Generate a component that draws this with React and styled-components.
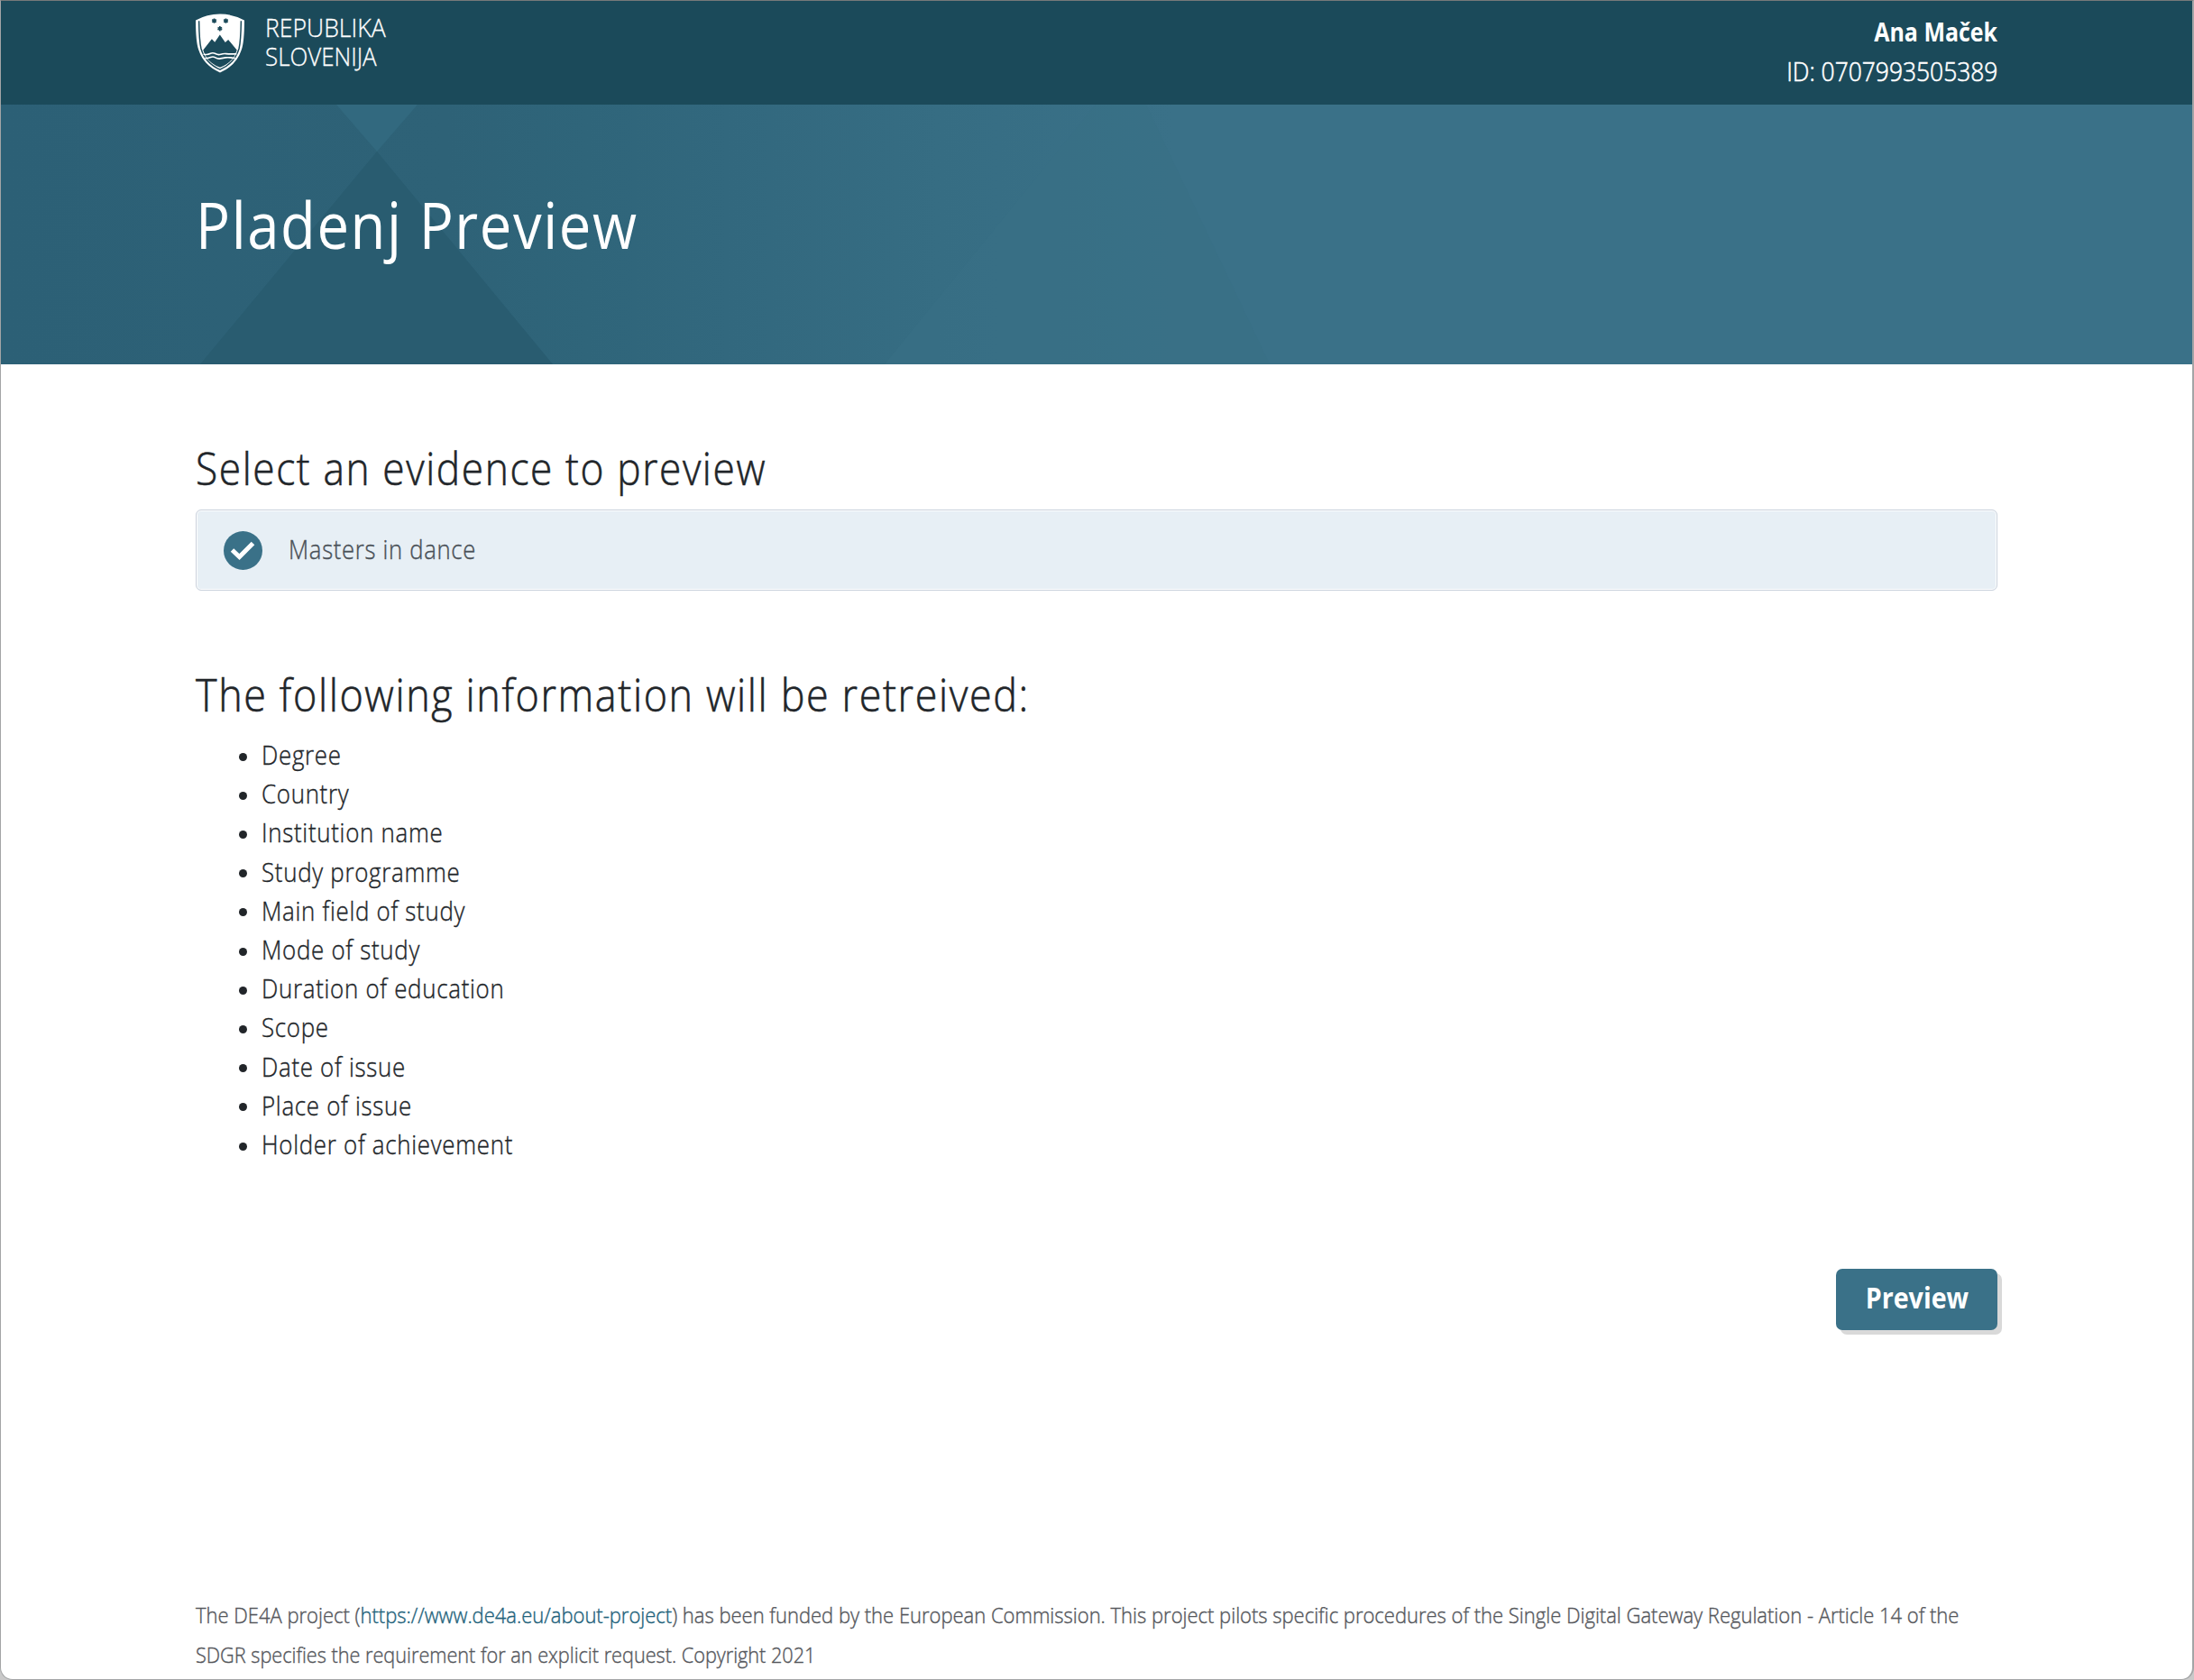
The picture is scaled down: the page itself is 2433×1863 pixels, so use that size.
import React from 'react';
import styled, { createGlobalStyle } from 'styled-components';

const GlobalStyle = createGlobalStyle`
  *, *::before, *::after { box-sizing: border-box; }
  html, body { margin: 0; padding: 0; background: #c9c9c9; }
  body {
    font-family: "Open Sans", "Noto Sans", sans-serif;
    font-size: 29px;
    font-weight: 300;
    line-height: 43.2px;
    color: #212529;
  }
`;

const Narrow = styled.span`
  display: inline-block;
  white-space: nowrap;
  transform: scaleX(${(p) => p.$x});
  transform-origin: ${(p) => p.$from || 'left'} center;
  -webkit-text-stroke: ${(p) => p.$stroke || 0}px currentColor;
`;

const Page = styled.div`
  width: 100%;
  height: 1863px;
  display: flex;
  flex-direction: column;
  background: #fff;
  border: 1px solid #a3a5a6;
  border-top-color: #77797a;
  border-right-width: 2px;
  border-radius: 0 0 14px 14px;
  overflow: hidden;
`;

const TopBar = styled.header`
  height: 115px;
  flex: none;
  display: flex;
  justify-content: space-between;
  padding: 0 216px;
  background: #1b4a5a;
  color: #fff;
`;

const Brand = styled.div`
  display: flex;
  gap: 23px;
  padding-top: 14px;
`;

const BrandName = styled.div`
  display: flex;
  flex-direction: column;
  font-size: 27px;
  line-height: 32px;
`;

const User = styled.div`
  display: flex;
  flex-direction: column;
  align-items: flex-end;
  padding-top: 12px;
  line-height: 44px;
`;

const UserName = styled.strong`
  font-weight: 700;
`;

const UserId = styled.span``;

const Hero = styled.section`
  position: relative;
  height: 288px;
  flex: none;
  padding: 92px 216px 0;
  background: #3a7188;
  color: #fff;
`;

const HeroArt = styled.svg`
  position: absolute;
  inset: 0;
  width: 2430px;
  height: 288px;
`;

const Title = styled.h1`
  position: relative;
  margin: 0;
  font-size: 72px;
  line-height: 80px;
  font-weight: 400;
  letter-spacing: 1.8px;
`;

const Main = styled.main`
  flex: 1;
  display: flex;
  flex-direction: column;
  padding: 85px 216px 0;
`;

const Heading = styled.h2`
  margin: 0;
  font-size: 50px;
  line-height: 60px;
  font-weight: 300;
  letter-spacing: 1.8px;
`;

const Evidence = styled.div`
  display: flex;
  align-items: center;
  gap: 29px;
  height: 90px;
  margin: 16px 0 85px;
  padding: 0 30px;
  background: #e7eff5;
  border: 1px solid #c9d1dc;
  border-radius: 6px;
  box-shadow: inset 0 0 0 1px #fff;
  color: #495057;
  letter-spacing: 0.8px;
`;

const EvidenceName = styled.span`
  padding-bottom: 2px;
`;

const FieldList = styled.ul`
  list-style: none;
  margin: 15px 0 0;
  padding: 0 0 0 48px;
  letter-spacing: 0.8px;
`;

const Field = styled.li`
  display: flex;
  align-items: center;
  gap: 16px;

  &::before {
    content: "";
    width: 9px;
    height: 9px;
    margin-top: 5px;
    border-radius: 50%;
    background: #212529;
  }
`;

const Actions = styled.div`
  display: flex;
  justify-content: flex-end;
  margin-top: 117px;
`;

const Button = styled.button`
  width: 179px;
  height: 68px;
  padding: 0 0 5px;
  border: 0;
  border-radius: 7px;
  background: #3a7188;
  box-shadow: 5px 5px 0 #d9d9d9;
  color: #fff;
  font-family: inherit;
  font-size: 32px;
  font-weight: 700;
`;

const Footer = styled.footer`
  padding: 1px 216px 0;
  height: 94px;
  flex: none;
  display: flex;
  flex-direction: column;
  align-items: flex-start;
  font-size: 24px;
  line-height: 43.6px;
  color: #55575c;
`;

const Link = styled.a`
  color: #22627b;
  text-decoration: none;
`;

const Emblem = () => (
  <svg width="54" height="66" viewBox="80 43 163 198">
    <path d="M80 65Q118 44 161.500 44Q205 44 243 65Q243 138 233 165Q216 217 161.500 240Q107 217 90 165Q80 138 80 65Z" fill="#fff" />
    <path d="M91 67Q92 135 98 160Q112 208 161.500 230Q211 208 225 160Q231 135 232 67" fill="none" stroke="#1b4a5a" strokeWidth="4.500" />
    <path d="M105 165L134 128L144 138L161 113L179 139L189 130L218 165Q215 176 208 187Q194 210 161.500 223Q129 210 115 187Q108 176 105 165Z" fill="#1b4a5a" />
    <path d="M106 178Q119 182 128 177T146 177T164 179T182 177T200 178T217 177M111 192Q122 193 130 189T146 190T163 193T180 190T196 190T212 192" fill="none" stroke="#fff" strokeWidth="5" />
    {[[142, 67], [181, 67], [161, 93]].map(([x, y]) => (
      <path key={`${x}-${y}`} d={`M${x} ${y - 8}V${y + 8}M${x - 7} ${y - 4}L${x + 7} ${y + 4}M${x - 7} ${y + 4}L${x + 7} ${y - 4}`} stroke="#1b4a5a" strokeWidth="5" />
    ))}
  </svg>
);

const CheckIcon = () => (
  <svg width="43" height="43" viewBox="0 0 43 43">
    <circle cx="21.500" cy="21.500" r="21.500" fill="#3a7188" />
    <path d="M9.500 21L17.500 28.500L32.500 13.500" fill="none" stroke="#fff" strokeWidth="5" />
  </svg>
);

const HeroBackground = () => (
  <HeroArt viewBox="0 0 2430 288" aria-hidden="true">
    <defs>
      <linearGradient id="base" gradientUnits="userSpaceOnUse" x1="0" y1="0" x2="1300" y2="0">
        <stop offset="0" stopColor="#2c6076" />
        <stop offset="0.38" stopColor="#2e6277" />
        <stop offset="0.5" stopColor="#2f657a" />
        <stop offset="0.62" stopColor="#32687e" />
        <stop offset="0.8" stopColor="#366d83" />
        <stop offset="1" stopColor="#3a7188" />
      </linearGradient>
    </defs>
    <path d="M0 0H2430V288H0Z" fill="url(#base)" />
    <path d="M372 0H462L417 52Z" fill="#32697f" />
    <path d="M417 52L612 288H221Z" fill="#295c70" />
    <path d="M1214 0H1270L1407 288H980Z" fill="#387086" opacity="0.6" />
  </HeroArt>
);

const fields = [
  'Degree', 'Country', 'Institution name', 'Study programme', 'Main field of study', 'Mode of study',
  'Duration of education', 'Scope', 'Date of issue', 'Place of issue', 'Holder of achievement',
];

export default function App() {
  return (
    <>
      <GlobalStyle />
      <Page>
        <TopBar>
          <Brand>
            <Emblem />
            <BrandName>
              <Narrow $x={0.985} $stroke={0.3}>REPUBLIKA</Narrow>
              <Narrow $x={0.96} $stroke={0.3}>SLOVENIJA</Narrow>
            </BrandName>
          </Brand>
          <User>
            <UserName><Narrow $x={0.86} $from="right">Ana Maček</Narrow></UserName>
            <UserId><Narrow $x={0.91} $from="right" $stroke={0.6}>ID: 0707993505389</Narrow></UserId>
          </User>
        </TopBar>
        <Hero>
          <HeroBackground />
          <Title><Narrow $x={0.88}>Pladenj Preview</Narrow></Title>
        </Hero>
        <Main>
          <Heading><Narrow $x={0.886} $stroke={0.6}>Select an evidence to preview</Narrow></Heading>
          <Evidence>
            <CheckIcon />
            <EvidenceName><Narrow $x={0.884} $stroke={0.4}>Masters in dance</Narrow></EvidenceName>
          </Evidence>
          <Heading><Narrow $x={0.898} $stroke={0.6}>The following information will be retreived:</Narrow></Heading>
          <FieldList>
            {fields.map((name) => (
              <Field key={name}><Narrow $x={0.892} $stroke={0.4}>{name}</Narrow></Field>
            ))}
          </FieldList>
          <Actions>
            <Button><Narrow $x={0.895} $from="center">Preview</Narrow></Button>
          </Actions>
        </Main>
        <Footer>
          <Narrow $x={0.916} $stroke={0.4}>
            The DE4A project (<Link>https://www.de4a.eu/about-project</Link>) has been funded by the European Commission. This project pilots specific procedures of the Single Digital Gateway Regulation - Article 14 of the
          </Narrow>
          <Narrow $x={0.903} $stroke={0.4}>SDGR specifies the requirement for an explicit request. Copyright 2021</Narrow>
        </Footer>
      </Page>
    </>
  );
}
